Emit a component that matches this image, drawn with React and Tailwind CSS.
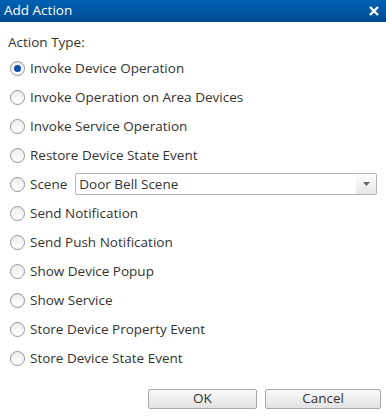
import React from "react";

const options = [
  "Invoke Device Operation",
  "Invoke Operation on Area Devices",
  "Invoke Service Operation",
  "Restore Device State Event",
  "Scene",
  "Send Notification",
  "Send Push Notification",
  "Show Device Popup",
  "Show Service",
  "Store Device Property Event",
  "Store Device State Event",
];

function Radio({ checked }) {
  return (
    <span className="relative flex h-[15px] w-[15px] shrink-0 items-center justify-center rounded-full border border-[#8f959c] bg-gradient-to-b from-[#ececec] to-white">
      {checked && <span className="h-[7px] w-[7px] rounded-full bg-[#0d4ea8]" />}
    </span>
  );
}

export default function App() {
  return (
    <div className="h-[417px] w-[386px] bg-white text-[#333]" style={{ fontFamily: '"Open Sans", "Noto Sans", sans-serif' }}>
      <div className="flex h-[22px] items-center justify-between bg-gradient-to-b from-[#0062b4] to-[#004b92] pl-[4px] pr-[7px] text-white">
        <span className="text-[13.5px] leading-none">Add Action</span>
        <svg width="10" height="10" viewBox="0 0 10 10">
          <path d="M1 1 L9 9 M9 1 L1 9" stroke="white" strokeWidth="2.4" />
        </svg>
      </div>
      <div className="pl-[8px] pt-[14px] text-[13.5px] leading-none">Action Type:</div>
      <div className="mt-[4px] flex flex-col">
        {options.map((o, i) => (
          <div key={o} className="flex h-[29px] items-center pl-[10px]">
            <Radio checked={i === 0} />
            <span className="ml-[5px] text-[13.5px]">{o}</span>
            {o === "Scene" && (
              <div className="ml-[8px] flex h-[22px] w-[302px] items-center justify-between rounded-[2px] border border-[#b5b5b5] bg-white pl-[3px]">
                <span className="text-[13.5px]">Door Bell Scene</span>
                <span className="flex h-full w-[20px] items-center justify-center bg-gradient-to-b from-white to-[#e6e6e6]">
                  <svg width="7" height="4" viewBox="0 0 7 4"><path d="M0 0 H7 L3.5 4 Z" fill="#666" /></svg>
                </span>
              </div>
            )}
          </div>
        ))}
      </div>
      <div className="mt-[16px] flex justify-end gap-[8px] pr-[5px]">
        <button className="h-[20px] w-[109px] rounded-[2px] border border-[#a8a8a8] bg-gradient-to-b from-[#fafafa] to-[#e2e2e2] text-[13.5px] leading-none text-[#333]">OK</button>
        <button className="h-[20px] w-[116px] rounded-[2px] border border-[#a8a8a8] bg-gradient-to-b from-[#fafafa] to-[#e2e2e2] text-[13.5px] leading-none text-[#333]">Cancel</button>
      </div>
    </div>
  );
}
